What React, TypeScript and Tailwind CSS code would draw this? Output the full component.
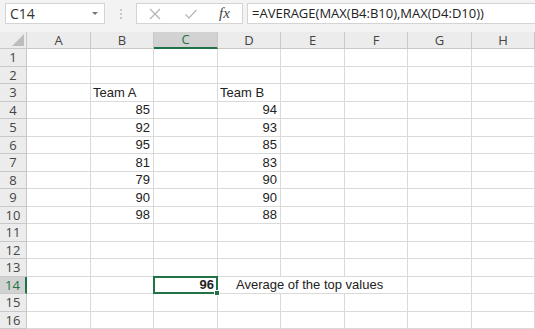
import type { ReactNode } from "react";

const cols = ["A", "B", "C", "D", "E", "F", "G", "H"];

// cell contents keyed by "row-col"
const data: Record<string, { text: string; align?: "left" | "right"; bold?: boolean; span?: number; indent?: boolean }> = {
  "3-B": { text: "Team A" },
  "3-D": { text: "Team B" },
  "4-B": { text: "85", align: "right" },
  "5-B": { text: "92", align: "right" },
  "6-B": { text: "95", align: "right" },
  "7-B": { text: "81", align: "right" },
  "8-B": { text: "79", align: "right" },
  "9-B": { text: "90", align: "right" },
  "10-B": { text: "98", align: "right" },
  "4-D": { text: "94", align: "right" },
  "5-D": { text: "93", align: "right" },
  "6-D": { text: "85", align: "right" },
  "7-D": { text: "83", align: "right" },
  "8-D": { text: "90", align: "right" },
  "9-D": { text: "90", align: "right" },
  "10-D": { text: "88", align: "right" },
  "14-C": { text: "96", align: "right", bold: true },
  "14-D": { text: "Average of the top values", span: 3, indent: true },
};

// cells covered by overflowing text
const hidden = new Set(["14-E", "14-F"]);

function FormulaBar() {
  return (
    <div className="flex h-[32px] items-start gap-0 bg-[#f3f3f3] pt-[3px]">
      {/* name box */}
      <div className="ml-[5px] flex h-[21px] w-[100px] items-center justify-between border border-[#d4d4d4] bg-white pl-[4px] pr-[6px]">
        <span className="text-[14px] text-[#333]" style={{ fontFamily: "'Open Sans', 'Liberation Sans', sans-serif" }}>
          C14
        </span>
        <span className="h-0 w-0 border-x-[3px] border-t-[3px] border-x-transparent border-t-[#777]" />
      </div>
      {/* grip dots */}
      <div className="flex h-[21px] w-[31px] flex-col items-center justify-center gap-[2px]">
        <span className="h-[2px] w-[2px] bg-[#c8c8c8]" />
        <span className="h-[2px] w-[2px] bg-[#c8c8c8]" />
        <span className="h-[2px] w-[2px] bg-[#c8c8c8]" />
      </div>
      {/* buttons */}
      <div className="flex h-[21px] w-[107px] items-center border border-[#d4d4d4] bg-white">
        <svg width="14" height="14" viewBox="0 0 14 14" className="ml-[11px]">
          <path d="M2 2 L12 12 M12 2 L2 12" stroke="#b4b4b4" strokeWidth="1.2" fill="none" />
        </svg>
        <svg width="14" height="14" viewBox="0 0 14 14" className="ml-[22px]">
          <path d="M1.5 7.5 L5 11 L12.5 3" stroke="#b4b4b4" strokeWidth="1.2" fill="none" />
        </svg>
        <span
          className="ml-[21px] text-[15px] italic text-[#444]"
          style={{ fontFamily: "'Liberation Serif', serif" }}
        >
          fx
        </span>
      </div>
      {/* formula */}
      <div className="ml-[4px] flex h-[21px] flex-1 items-center border border-r-0 border-[#d4d4d4] bg-white pl-[4px]">
        <span className="text-[13px] text-[#222]" style={{ fontFamily: "'Open Sans', 'Liberation Sans', sans-serif" }}>
          =AVERAGE(MAX(B4:B10),MAX(D4:D10))
        </span>
      </div>
    </div>
  );
}

function Cell({ children, className }: { children?: ReactNode; className?: string }) {
  return <div className={`border-b border-r border-[#dadada] ${className ?? ""}`}>{children}</div>;
}

export default function App() {
  const rows = Array.from({ length: 16 }, (_, i) => i + 1);
  return (
    <div
      className="h-[329px] w-[535px] overflow-hidden bg-white"
      style={{ fontFamily: "'Liberation Sans', Arial, sans-serif" }}
    >
      <FormulaBar />
      <div className="grid grid-cols-[27px_64px_63px_64px_63px_64px_63px_64px_63px]">
        {/* header row */}
        <div className="relative h-[17px] border-b border-r border-[#c8c8c8] bg-[#ececec]">
          <svg width="12" height="12" viewBox="0 0 12 12" className="absolute right-[2px] bottom-[2px]">
            <path d="M12 0 L12 12 L0 12 Z" fill="#bdbdbd" />
          </svg>
        </div>
        {cols.map((c) => (
          <div
            key={c}
            className={`flex h-[17px] items-center justify-center border-r text-[13px] leading-none ${
              c === "C"
                ? "border-b-2 border-b-[#217346] border-r-[#c8c8c8] bg-[#d2d2d2] text-[#217346]"
                : "border-b border-[#c8c8c8] bg-[#ececec] text-[#444]"
            }`}
            style={{ fontFamily: "'Open Sans', 'Liberation Sans', sans-serif" }}
          >
            {c}
          </div>
        ))}

        {rows.map((r) => {
          const h = r % 2 === 1 ? "h-[18px]" : "h-[17px]";
          return (
            <div key={r} className="contents">
              <div
                className={`flex ${h} items-center justify-center border-b text-[13px] leading-none ${
                  r === 14
                    ? "border-r-2 border-r-[#217346] border-b-[#c8c8c8] bg-[#d2d2d2] text-[#217346]"
                    : "border-r border-[#c8c8c8] bg-[#ececec] text-[#444]"
                }`}
                style={{ fontFamily: "'Open Sans', 'Liberation Sans', sans-serif" }}
              >
                {r}
              </div>
              {cols.map((c) => {
                if (hidden.has(`${r}-${c}`)) return null;
                const d = data[`${r}-${c}`];
                const selected = r === 14 && c === "C";
                return (
                  <Cell
                    key={c}
                    className={`relative flex ${h} items-center whitespace-nowrap text-[13px] text-[#222] ${
                      d?.align === "right" ? "justify-end pr-[3px]" : d?.indent ? "justify-start pl-[18px]" : "justify-start pl-[2px]"
                    } ${d?.bold ? "font-bold" : ""} ${d?.span === 3 ? "col-span-3" : ""}`}
                  >
                    {d && <span>{d.text}</span>}
                    {selected && (
                      <>
                        <div className="pointer-events-none absolute -left-[1px] -top-[1px] right-[-1px] bottom-[-1px] border-2 border-[#217346]" />
                        <div className="absolute -bottom-[3px] -right-[3px] z-20 h-[6px] w-[6px] border border-white bg-[#217346]" />
                      </>
                    )}
                  </Cell>
                );
              })}
            </div>
          );
        })}
      </div>
    </div>
  );
}
